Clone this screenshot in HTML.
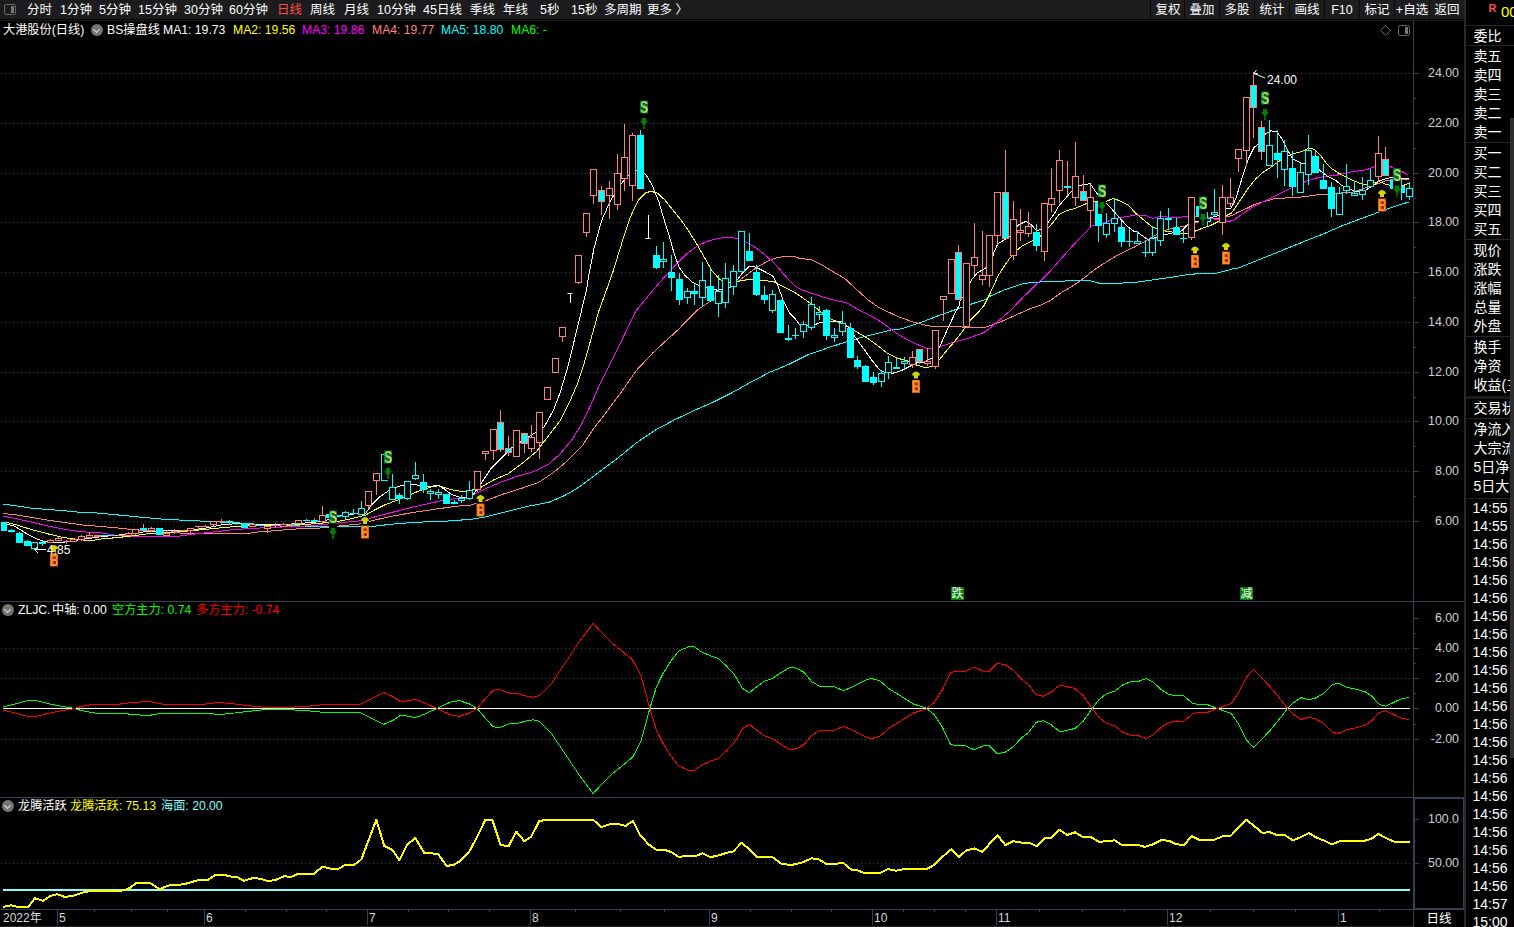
<!DOCTYPE html>
<html lang="zh-CN"><head><meta charset="utf-8"><title>大港股份(日线)</title>
<style>
*{margin:0;padding:0;box-sizing:border-box}
html,body{width:1514px;height:927px;background:#000;overflow:hidden}
body{position:relative;font-family:"Liberation Sans","Noto Sans CJK SC",sans-serif;font-size:12px;color:#fff}
#tb{position:absolute;left:0;top:0;width:1464px;height:19px;background:#1c1c1e;box-shadow:0 1px 0 #050505,0 2px 0 #1b1b1d}
#tb span,#tb b{position:absolute;top:0;height:19px;line-height:21px;overflow:hidden;font-weight:normal;white-space:nowrap;font-size:12.5px}
#tb span.act{color:#ff4d4d}
#tb b{width:34px;text-align:center;background:#1d1d1f;box-shadow:-1px 0 0 #0a0a0a}
#ico{position:absolute;left:4px;top:4px;width:12px;height:11px;border:1px solid #666;border-radius:2px}
#ico:after{content:"";position:absolute;right:1px;top:1px;width:3px;height:7px;background:#777}
#hdr,.cap{position:absolute;left:0;top:21px;width:700px;height:18px;line-height:18px;white-space:nowrap;font-size:12.2px}
#hdr span,.cap span{position:absolute;top:0}
#hdr .dd,.cap .dd{width:12px;height:12px;border-radius:50%;background:#757575}
.dd:after{content:"";position:absolute;left:3px;top:2.5px;width:4px;height:4px;border-right:1px solid #ddd;border-bottom:1px solid #ddd;transform:rotate(45deg)}
#chart{position:absolute;left:0;top:0}
i{position:absolute;left:1414px;width:45px;text-align:right;font-style:normal;font-size:12.4px;line-height:16px;color:#d0d0d0}
em{position:absolute;top:910px;font-style:normal;font-size:12px;line-height:17px;color:#d8d8d8}
#rx{position:absolute;left:1414px;top:911px;width:50px;height:18px;line-height:17px;text-align:center;font-size:12.5px}
#vb{position:absolute;left:1464px;top:0;width:2px;height:927px;background:#2a2a2c}
#rp{position:absolute;left:1466px;top:0;width:48px;height:927px;background:#000;overflow:hidden}
#rp p{position:absolute;left:7.5px;font-size:14px;line-height:20px;white-space:nowrap}
#rp u{position:absolute;left:0;width:48px;height:1px;background:#26262a;text-decoration:none}
#rp .thick{position:absolute;left:0;top:396px;width:48px;height:3px;background:#1b1b1d}
#rp .R{position:absolute;left:22.5px;top:2.5px;font-size:11px;font-weight:bold;color:#ff4d4d;line-height:11px}
#rp .code{position:absolute;left:35px;top:2px;font-size:15px;line-height:19px;color:#ffff00}
#sb{position:absolute;left:1510px;top:118px;width:4px;height:640px;background:#2e2e30}
</style></head><body>
<div id="tb"><div id="ico"></div><span style="left:27px">分时</span><span style="left:60px">1分钟</span><span style="left:99px">5分钟</span><span style="left:138px">15分钟</span><span style="left:184px">30分钟</span><span style="left:229px">60分钟</span><span class="act" style="left:277px">日线</span><span style="left:310px">周线</span><span style="left:344px">月线</span><span style="left:377px">10分钟</span><span style="left:423px">45日线</span><span style="left:470px">季线</span><span style="left:503px">年线</span><span style="left:540px">5秒</span><span style="left:571px">15秒</span><span style="left:604px">多周期</span><span style="left:647px">更多 〉</span><b style="left:1151px">复权</b><b style="left:1185px">叠加</b><b style="left:1220px">多股</b><b style="left:1255px">统计</b><b style="left:1290px">画线</b><b style="left:1325px">F10</b><b style="left:1360px">标记</b><b style="left:1395px">+自选</b><b style="left:1430px">返回</b></div>
<svg id="chart" width="1466" height="927" viewBox="0 0 1466 927" shape-rendering="auto">
<defs><linearGradient id="sg" x1="0" y1="0" x2="1" y2="0"><stop offset="0" stop-color="#4fd060"/><stop offset="0.55" stop-color="#9fe04a"/><stop offset="1" stop-color="#e4ee3c"/></linearGradient></defs>
<line x1="1" y1="73.5" x2="1413" y2="73.5" stroke="#3a4354" stroke-width="1" stroke-dasharray="1 3"/>
<line x1="1" y1="123.5" x2="1413" y2="123.5" stroke="#3a4354" stroke-width="1" stroke-dasharray="1 3"/>
<line x1="1" y1="173.5" x2="1413" y2="173.5" stroke="#3a4354" stroke-width="1" stroke-dasharray="1 3"/>
<line x1="1" y1="222.5" x2="1413" y2="222.5" stroke="#3a4354" stroke-width="1" stroke-dasharray="1 3"/>
<line x1="1" y1="272.5" x2="1413" y2="272.5" stroke="#3a4354" stroke-width="1" stroke-dasharray="1 3"/>
<line x1="1" y1="322.5" x2="1413" y2="322.5" stroke="#3a4354" stroke-width="1" stroke-dasharray="1 3"/>
<line x1="1" y1="372.5" x2="1413" y2="372.5" stroke="#3a4354" stroke-width="1" stroke-dasharray="1 3"/>
<line x1="1" y1="421.5" x2="1413" y2="421.5" stroke="#3a4354" stroke-width="1" stroke-dasharray="1 3"/>
<line x1="1" y1="471.5" x2="1413" y2="471.5" stroke="#3a4354" stroke-width="1" stroke-dasharray="1 3"/>
<line x1="1" y1="521.5" x2="1413" y2="521.5" stroke="#3a4354" stroke-width="1" stroke-dasharray="1 3"/>
<line x1="1" y1="648.5" x2="1413" y2="648.5" stroke="#3a4354" stroke-width="1" stroke-dasharray="1 3"/>
<line x1="1" y1="678.5" x2="1413" y2="678.5" stroke="#3a4354" stroke-width="1" stroke-dasharray="1 3"/>
<line x1="1" y1="739.5" x2="1413" y2="739.5" stroke="#3a4354" stroke-width="1" stroke-dasharray="1 3"/>
<line x1="1" y1="863.5" x2="1413" y2="863.5" stroke="#3a4354" stroke-width="1" stroke-dasharray="1 3"/>
<polyline points="3.2,504.2 15.9,505.8 31.7,508.2 47.6,509.5 63.4,510.6 79.3,512.2 90.0,512.7 90.0,512.3 116.4,514.8 140.7,517.2 164.0,519.3 195.7,520.8 216.8,521.8 250.0,523.8 268.9,524.7 292.7,525.7 315.0,526.6 340.1,526.6 371.5,526.6 390.3,524.3 415.4,522.2 440.5,521.6 465.6,519.7 470.0,519.5 486.6,516.7 505.7,511.9 529.4,506.0 548.5,502.4 565.1,495.3 579.4,486.9 598.4,472.7 617.4,458.4 636.4,442.9 655.5,429.9 674.5,419.9 693.5,410.8 712.5,402.5 731.6,393.0 750.6,382.3 769.6,372.3 788.6,364.5 807.6,355.0 829.8,347.1 835.0,345.5 846.6,341.7 858.3,338.3 869.9,335.2 881.6,332.5 893.2,329.4 900.0,329.1 912.9,325.2 925.9,320.6 938.8,315.5 951.8,310.9 962.2,307.4 969.9,304.5 984.2,299.9 990.6,296.0 1003.6,290.2 1016.5,285.9 1024.3,283.4 1036.0,282.1 1048.9,281.8 1061.9,281.2 1079.9,280.2 1080.4,280.1 1092.0,281.1 1099.8,283.4 1115.3,283.4 1127.0,282.8 1134.8,282.4 1135.5,282.4 1156.3,279.4 1171.8,277.2 1187.4,274.6 1202.9,273.3 1215.9,273.3 1226.2,270.8 1234.6,268.2 1236.7,268.7 1310.4,239.0 1326.0,232.8 1341.5,226.0 1357.0,220.2 1372.6,214.4 1388.1,208.5 1399.8,204.7 1408.5,202.1" fill="none" stroke="#00ffff" stroke-width="1" stroke-linejoin="round" shape-rendering="crispEdges" />
<polyline points="3.2,513.5 15.9,514.8 31.7,517.4 47.6,520.1 63.4,522.4 79.3,524.5 89.9,525.9 90.0,525.6 116.4,527.8 132.3,529.6 139.7,530.1 158.7,531.7 179.9,533.0 216.8,533.2 250.0,533.1 257.0,532.1 268.9,531.2 286.7,529.7 302.2,528.5 315.0,528.5 340.1,525.9 365.2,523.4 371.5,520.9 390.3,516.5 415.4,512.1 440.5,508.4 465.6,505.2 470.0,505.2 484.3,501.2 503.3,494.1 522.3,488.1 539.0,482.2 553.2,472.7 567.5,460.8 581.8,446.5 593.6,428.7 605.5,413.2 619.8,394.2 636.4,370.4 653.1,352.6 667.4,339.5 677.8,330.0 686.6,321.0 698.3,309.3 709.9,301.6 721.6,293.8 733.2,285.0 744.9,276.3 756.5,267.6 768.2,260.8 775.9,257.9 785.6,256.3 795.3,256.9 800.0,258.5 811.7,259.7 821.4,264.6 833.0,271.7 844.7,278.5 856.3,289.2 868.0,299.9 877.7,306.7 889.3,312.5 900.0,317.4 912.9,321.9 925.9,325.2 933.7,326.9 951.8,326.9 969.9,327.1 985.5,327.1 993.2,324.5 1003.6,320.6 1016.5,314.8 1029.5,309.0 1042.4,304.5 1050.2,300.6 1061.9,292.2 1070.9,287.0 1079.9,281.2 1084.3,277.6 1095.9,268.8 1107.6,261.1 1119.2,254.3 1130.9,248.4 1134.8,246.9 1135.5,246.1 1143.3,242.3 1151.1,237.7 1158.9,233.2 1166.6,229.9 1174.4,228.0 1182.2,226.7 1189.9,224.8 1197.7,222.2 1205.5,219.6 1213.3,218.3 1221.0,218.3 1228.8,216.3 1234.6,214.4 1236.7,212.8 1244.4,209.5 1254.1,204.7 1263.8,201.7 1275.5,198.3 1289.1,197.9 1302.7,196.9 1316.3,195.0 1329.9,194.0 1341.5,193.0 1353.2,192.0 1364.8,188.2 1376.5,184.3 1386.2,180.4 1395.9,179.4 1408.5,179.4" fill="none" stroke="#ff8080" stroke-width="1" stroke-linejoin="round" shape-rendering="crispEdges" />
<polyline points="3.2,516.4 15.9,518.5 31.7,522.2 47.6,525.9 63.4,529.1 79.3,531.5 89.9,532.3 90.0,532.4 100.6,532.7 116.4,535.4 140.7,536.4 177.7,536.4 185.1,535.2 193.6,534.1 209.5,532.4 225.3,530.6 233.8,529.6 250.0,528.5 268.9,527.6 286.7,526.8 302.2,526.2 315.0,525.3 340.1,522.8 365.2,520.3 371.5,517.8 390.3,512.8 415.4,506.5 440.5,500.9 453.0,499.0 465.6,497.7 470.0,496.4 484.3,489.3 500.9,482.2 517.6,476.2 534.2,471.5 548.5,464.3 560.4,453.6 572.2,439.4 581.8,423.9 591.3,403.7 600.8,382.3 610.3,363.3 619.8,344.3 635.6,311.4 651.7,291.8 663.3,278.3 675.0,265.6 686.6,254.0 698.3,245.2 709.9,240.4 721.6,237.9 733.2,237.9 739.0,238.8 746.8,242.3 756.5,248.2 766.2,255.9 775.9,264.7 785.6,276.3 795.3,286.0 800.0,289.2 811.7,293.1 823.3,297.0 835.0,300.3 846.6,302.8 858.3,309.6 869.9,315.4 881.6,322.2 893.2,331.0 900.0,335.5 912.9,342.7 925.9,348.1 932.4,348.5 938.8,347.2 951.8,342.7 964.7,339.4 977.7,334.9 984.2,332.3 990.6,327.8 997.1,321.9 1010.1,310.9 1023.0,297.3 1036.0,284.4 1042.4,279.2 1048.9,272.7 1061.9,257.8 1074.8,243.6 1079.9,238.0 1080.4,237.8 1092.0,226.1 1099.8,224.2 1107.6,221.3 1119.2,217.8 1130.9,215.8 1134.8,215.4 1135.5,214.8 1145.9,215.7 1152.4,218.3 1158.9,216.7 1166.6,217.0 1177.0,217.3 1187.4,216.7 1197.7,216.3 1208.1,217.6 1213.3,218.9 1221.0,219.8 1228.8,221.5 1234.6,219.8 1236.7,217.7 1240.5,215.3 1250.2,208.5 1260.0,203.7 1269.7,198.8 1279.4,194.0 1289.1,189.1 1298.8,184.3 1308.5,180.4 1318.2,177.5 1327.9,176.1 1337.6,175.0 1347.3,172.6 1357.0,171.1 1366.7,169.7 1374.5,166.8 1382.3,164.9 1390.0,166.4 1397.8,169.7 1405.6,173.6 1408.5,175.5" fill="none" stroke="#ff00ff" stroke-width="1" stroke-linejoin="round" shape-rendering="crispEdges" />
<polyline points="7.4,522.7 15.9,524.8 31.7,529.6 47.6,533.8 63.4,537.5 74.0,538.9 84.6,540.2 89.9,540.7 90.0,540.7 102.7,538.8 116.4,537.7 132.3,535.9 147.1,533.8 164.0,532.7 179.9,531.7 195.7,530.3 209.5,529.0 225.3,527.4 238.0,526.4 250.0,525.9 268.9,525.2 286.7,525.2 302.2,524.4 315.0,523.8 337.6,521.6 352.6,518.4 365.2,515.3 375.2,509.6 385.3,504.6 395.3,500.9 405.3,497.1 415.4,492.4 424.2,489.2 432.9,486.4 439.2,485.8 446.7,488.3 454.3,490.4 461.8,491.4 469.3,490.8 479.5,488.1 493.8,479.8 508.0,473.9 522.3,463.2 536.6,451.3 548.5,435.8 560.4,420.4 569.9,401.3 577.0,384.7 584.1,363.3 588.9,346.6 598.7,311.4 606.5,290.0 613.4,270.4 622.0,242.4 630.6,216.5 638.2,200.3 645.7,192.8 651.1,191.3 657.6,193.2 665.1,200.3 673.8,211.1 682.4,221.9 688.5,230.7 696.3,243.3 704.1,256.9 711.8,270.5 719.6,279.2 727.4,283.1 735.1,282.5 741.0,280.6 748.7,279.6 756.5,279.8 764.3,280.6 774.0,281.7 783.7,287.0 795.3,292.8 800.0,296.0 809.7,302.8 819.4,310.6 829.1,318.3 838.8,322.2 848.5,327.1 858.3,332.9 868.0,338.7 877.7,345.5 887.4,353.3 897.1,358.2 906.8,360.5 916.5,365.0 926.2,367.9 932.0,365.9 939.8,359.1 947.6,349.4 955.7,340.1 964.7,328.4 969.9,320.6 977.7,312.9 984.2,305.1 990.6,292.2 998.4,275.3 1004.9,265.0 1010.1,257.8 1016.5,250.7 1021.7,246.2 1029.5,242.3 1033.4,240.1 1039.6,236.8 1047.4,229.0 1053.2,222.2 1059.0,214.5 1066.8,210.6 1074.6,208.6 1082.3,205.3 1090.1,202.2 1097.9,201.8 1105.6,201.8 1113.4,198.3 1121.2,201.5 1128.9,205.7 1134.8,212.5 1135.5,213.1 1143.3,219.6 1151.1,226.1 1158.9,229.9 1166.6,231.2 1177.0,232.8 1187.4,233.6 1195.1,231.2 1202.9,228.0 1210.7,225.4 1218.4,221.5 1223.6,217.0 1231.4,213.1 1236.7,205.6 1240.5,199.8 1248.3,188.2 1256.1,178.4 1263.8,171.7 1271.6,166.8 1279.4,161.0 1287.1,156.1 1294.9,153.2 1302.7,151.3 1308.5,148.3 1314.3,149.3 1320.1,155.1 1326.0,162.9 1331.8,168.7 1339.6,173.6 1347.3,177.5 1355.1,181.4 1362.9,184.3 1370.6,184.3 1378.4,181.4 1386.2,184.3 1393.9,186.2 1401.7,186.2 1408.5,183.3" fill="none" stroke="#ffff00" stroke-width="1" stroke-linejoin="round" shape-rendering="crispEdges" />
<polyline points="7.4,524.3 13.7,525.9 21.1,530.1 28.5,534.9 35.9,538.6 44.4,541.4 52.9,542.8 63.4,542.3 74.0,540.7 84.6,538.9 89.9,538.3 90.0,538.3 102.7,536.4 116.4,535.4 140.7,532.2 164.0,530.6 179.9,530.6 195.7,529.6 209.5,527.4 222.1,524.8 238.0,523.5 250.0,525.2 268.9,524.4 286.7,524.4 302.2,523.2 315.0,522.2 326.3,520.3 337.6,515.9 352.6,514.0 365.2,513.8 371.5,505.2 380.2,496.5 390.3,489.6 400.3,485.8 410.4,484.2 419.1,485.2 427.9,486.7 438.0,485.4 444.2,488.9 451.8,494.6 459.3,497.1 465.6,497.1 473.6,494.1 481.9,482.2 491.4,467.9 500.9,458.4 511.6,447.7 543.7,427.5 553.2,410.8 560.4,391.8 567.5,368.0 572.2,349.0 576.8,330.0 581.3,311.4 586.5,290.0 588.5,276.9 593.9,248.9 601.5,220.8 610.1,201.4 617.7,188.5 625.2,178.7 630.6,173.4 638.2,169.5 645.7,174.4 652.2,185.2 658.7,201.4 665.1,223.0 669.1,235.5 674.0,253.0 678.8,266.6 684.7,275.3 692.4,282.1 698.3,285.0 704.1,287.0 717.7,290.3 729.3,288.0 737.1,280.2 742.9,272.4 748.7,266.6 752.6,266.2 758.4,268.5 766.2,272.4 773.0,276.3 777.9,286.0 783.7,301.6 789.5,313.2 795.3,319.0 800.0,325.1 811.7,326.1 819.4,322.8 829.1,321.3 840.8,321.3 848.5,327.1 856.3,338.7 864.1,349.4 871.8,360.1 879.6,369.8 885.4,372.7 893.2,373.1 901.0,370.8 908.7,366.9 916.5,363.0 924.3,362.0 932.0,358.2 939.8,346.5 947.6,329.0 955.3,312.5 959.6,304.8 960.0,300.9 965.8,293.1 971.7,279.5 977.5,272.7 985.2,268.3 991.1,264.0 994.0,252.3 997.9,243.6 1004.7,239.7 1011.5,234.9 1018.3,225.1 1026.0,221.3 1031.8,225.1 1036.7,231.0 1041.6,229.0 1047.4,223.2 1053.2,215.4 1059.0,205.7 1065.8,198.0 1072.6,190.2 1078.4,185.3 1084.3,184.8 1090.1,183.4 1095.9,192.1 1103.7,200.9 1111.5,208.6 1119.2,217.4 1127.0,226.1 1134.8,231.9 1136.8,231.9 1143.3,236.4 1148.5,240.3 1155.0,237.7 1164.0,235.1 1170.5,233.2 1177.0,232.5 1182.2,230.6 1187.4,224.8 1192.5,222.2 1197.7,221.5 1208.1,218.9 1213.3,217.0 1218.4,215.7 1223.6,211.8 1226.2,208.6 1230.8,208.2 1234.0,202.7 1236.7,195.9 1242.5,176.5 1248.3,159.0 1254.1,147.4 1260.0,142.5 1265.8,133.8 1270.6,130.9 1276.5,131.5 1281.3,137.7 1287.1,149.3 1293.0,159.0 1300.7,162.9 1306.6,163.9 1314.3,164.9 1320.1,170.7 1327.9,176.5 1335.7,180.4 1341.5,185.2 1349.3,189.1 1357.0,192.0 1364.8,190.5 1372.6,186.2 1380.3,180.4 1388.1,178.1 1395.9,177.5 1403.6,178.4 1408.5,178.8" fill="none" stroke="#ffffff" stroke-width="1" stroke-linejoin="round" shape-rendering="crispEdges" />
<rect x="1" y="522" width="6" height="9" fill="#00ffff"/>
<line x1="11.5" y1="529" x2="11.5" y2="530" stroke="#00ffff"/>
<rect x="8" y="530" width="7" height="2" fill="#00ffff"/>
<line x1="19.5" y1="532" x2="19.5" y2="533" stroke="#00ffff"/>
<rect x="16" y="533" width="7" height="10" fill="#00ffff"/>
<line x1="27.5" y1="540" x2="27.5" y2="541" stroke="#00ffff"/>
<rect x="24" y="541" width="7" height="5" fill="#00ffff"/>
<rect x="31.5" y="542.5" width="6" height="6" fill="#000" stroke="#00ffff"/>
<line x1="42.5" y1="541" x2="42.5" y2="542" stroke="#00ffff"/>
<line x1="42.5" y1="544" x2="42.5" y2="546" stroke="#00ffff"/>
<rect x="39" y="542" width="7" height="2" fill="#00ffff"/>
<line x1="50.5" y1="539" x2="50.5" y2="540" stroke="#ff8080"/>
<rect x="47.5" y="540.5" width="6" height="2" fill="#000" stroke="#ff8080"/>
<line x1="58.5" y1="537" x2="58.5" y2="538" stroke="#ff8080"/>
<rect x="55.5" y="538.5" width="6" height="2" fill="#000" stroke="#ff8080"/>
<line x1="66.5" y1="540" x2="66.5" y2="541" stroke="#ff8080"/>
<line x1="66.5" y1="542" x2="66.5" y2="544" stroke="#ff8080"/>
<rect x="63" y="541" width="7" height="1" fill="#ff8080"/>
<line x1="73.5" y1="538" x2="73.5" y2="539" stroke="#ff8080"/>
<rect x="70.5" y="539.5" width="6" height="2" fill="#000" stroke="#ff8080"/>
<line x1="81.5" y1="535" x2="81.5" y2="536" stroke="#ff8080"/>
<line x1="81.5" y1="540" x2="81.5" y2="541" stroke="#ff8080"/>
<rect x="78.5" y="536.5" width="6" height="3" fill="#000" stroke="#ff8080"/>
<line x1="89.5" y1="532" x2="89.5" y2="535" stroke="#ff8080"/>
<line x1="89.5" y1="538" x2="89.5" y2="539" stroke="#ff8080"/>
<rect x="86.5" y="535.5" width="6" height="2" fill="#000" stroke="#ff8080"/>
<line x1="97.5" y1="537" x2="97.5" y2="538" stroke="#ff8080"/>
<rect x="94" y="535" width="7" height="2" fill="#ff8080"/>
<rect x="101" y="535" width="7" height="1" fill="#00ffff"/>
<rect x="109" y="535" width="7" height="1" fill="#00ffff"/>
<rect x="117" y="535" width="7" height="1" fill="#ff8080"/>
<line x1="128.5" y1="532" x2="128.5" y2="533" stroke="#ff8080"/>
<rect x="125.5" y="533.5" width="6" height="2" fill="#000" stroke="#ff8080"/>
<line x1="135.5" y1="534" x2="135.5" y2="535" stroke="#ff8080"/>
<rect x="132.5" y="529.5" width="6" height="4" fill="#000" stroke="#ff8080"/>
<line x1="143.5" y1="524" x2="143.5" y2="528" stroke="#ff8080"/>
<rect x="140" y="528" width="7" height="2" fill="#00ffff"/>
<line x1="151.5" y1="527" x2="151.5" y2="528" stroke="#ff8080"/>
<line x1="151.5" y1="531" x2="151.5" y2="532" stroke="#ff8080"/>
<rect x="148.5" y="528.5" width="6" height="2" fill="#000" stroke="#ff8080"/>
<rect x="156" y="528" width="7" height="7" fill="#00ffff"/>
<line x1="166.5" y1="531" x2="166.5" y2="533" stroke="#ff8080"/>
<rect x="163.5" y="533.5" width="6" height="2" fill="#000" stroke="#ff8080"/>
<line x1="174.5" y1="529" x2="174.5" y2="531" stroke="#ff8080"/>
<line x1="174.5" y1="532" x2="174.5" y2="534" stroke="#ff8080"/>
<rect x="171" y="531" width="7" height="1" fill="#ff8080"/>
<rect x="179" y="530" width="7" height="1" fill="#ff8080"/>
<line x1="190.5" y1="531" x2="190.5" y2="533" stroke="#ff8080"/>
<rect x="187.5" y="528.5" width="6" height="2" fill="#000" stroke="#ff8080"/>
<line x1="198.5" y1="527" x2="198.5" y2="530" stroke="#ff8080"/>
<rect x="195" y="526" width="7" height="1" fill="#ff8080"/>
<line x1="205.5" y1="525" x2="205.5" y2="526" stroke="#ff8080"/>
<rect x="202" y="526" width="7" height="1" fill="#ff8080"/>
<line x1="213.5" y1="525" x2="213.5" y2="527" stroke="#ff8080"/>
<rect x="210.5" y="521.5" width="6" height="3" fill="#000" stroke="#ff8080"/>
<line x1="221.5" y1="519" x2="221.5" y2="521" stroke="#ff8080"/>
<line x1="221.5" y1="522" x2="221.5" y2="524" stroke="#ff8080"/>
<rect x="218" y="521" width="7" height="1" fill="#ff8080"/>
<line x1="229.5" y1="520" x2="229.5" y2="521" stroke="#ff8080"/>
<line x1="229.5" y1="523" x2="229.5" y2="525" stroke="#ff8080"/>
<rect x="226" y="521" width="7" height="2" fill="#00ffff"/>
<line x1="236.5" y1="523" x2="236.5" y2="525" stroke="#00ffff"/>
<rect x="233" y="522" width="7" height="1" fill="#00ffff"/>
<rect x="241" y="524" width="7" height="4" fill="#00ffff"/>
<rect x="249.5" y="524.5" width="6" height="2" fill="#000" stroke="#ff8080"/>
<rect x="257" y="525" width="7" height="1" fill="#00ffff"/>
<line x1="267.5" y1="529" x2="267.5" y2="533" stroke="#ff8080"/>
<rect x="264.5" y="526.5" width="6" height="2" fill="#000" stroke="#ff8080"/>
<line x1="275.5" y1="523" x2="275.5" y2="525" stroke="#ff8080"/>
<line x1="275.5" y1="526" x2="275.5" y2="528" stroke="#ff8080"/>
<rect x="272" y="525" width="7" height="1" fill="#ff8080"/>
<line x1="283.5" y1="523" x2="283.5" y2="524" stroke="#ff8080"/>
<rect x="280.5" y="524.5" width="6" height="2" fill="#000" stroke="#ff8080"/>
<line x1="291.5" y1="523" x2="291.5" y2="524" stroke="#ff8080"/>
<line x1="291.5" y1="525" x2="291.5" y2="527" stroke="#ff8080"/>
<rect x="288" y="524" width="7" height="1" fill="#ff8080"/>
<rect x="295.5" y="520.5" width="6" height="3" fill="#000" stroke="#ff8080"/>
<line x1="306.5" y1="519" x2="306.5" y2="520" stroke="#00ffff"/>
<rect x="303" y="520" width="7" height="1" fill="#00ffff"/>
<line x1="314.5" y1="518" x2="314.5" y2="520" stroke="#ff8080"/>
<rect x="311" y="520" width="7" height="2" fill="#00ffff"/>
<line x1="322.5" y1="506" x2="322.5" y2="515" stroke="#ff8080"/>
<line x1="322.5" y1="522" x2="322.5" y2="523" stroke="#ff8080"/>
<rect x="319.5" y="515.5" width="6" height="6" fill="#000" stroke="#ff8080"/>
<rect x="326" y="514" width="7" height="4" fill="#00ffff"/>
<rect x="334" y="515" width="7" height="2" fill="#00ffff"/>
<line x1="345.5" y1="511" x2="345.5" y2="512" stroke="#00ffff"/>
<line x1="345.5" y1="517" x2="345.5" y2="519" stroke="#00ffff"/>
<rect x="342.5" y="512.5" width="6" height="4" fill="#000" stroke="#00ffff"/>
<line x1="353.5" y1="509" x2="353.5" y2="513" stroke="#00ffff"/>
<line x1="353.5" y1="514" x2="353.5" y2="515" stroke="#00ffff"/>
<rect x="350" y="513" width="7" height="1" fill="#00ffff"/>
<line x1="361.5" y1="501" x2="361.5" y2="508" stroke="#00ffff"/>
<rect x="358.5" y="508.5" width="6" height="6" fill="#000" stroke="#00ffff"/>
<line x1="368.5" y1="506" x2="368.5" y2="509" stroke="#ff8080"/>
<rect x="365.5" y="491.5" width="6" height="14" fill="#000" stroke="#ff8080"/>
<line x1="376.5" y1="481" x2="376.5" y2="495" stroke="#ff8080"/>
<rect x="373.5" y="473.5" width="6" height="7" fill="#000" stroke="#ff8080"/>
<rect x="381.5" y="454.5" width="6" height="26" fill="#000" stroke="#00ffff"/>
<line x1="392.5" y1="474" x2="392.5" y2="487" stroke="#00ffff"/>
<rect x="389.5" y="487.5" width="6" height="12" fill="#000" stroke="#00ffff"/>
<line x1="399.5" y1="493" x2="399.5" y2="495" stroke="#00ffff"/>
<line x1="399.5" y1="499" x2="399.5" y2="504" stroke="#00ffff"/>
<rect x="396" y="495" width="7" height="4" fill="#00ffff"/>
<line x1="407.5" y1="499" x2="407.5" y2="500" stroke="#00ffff"/>
<rect x="404.5" y="481.5" width="6" height="17" fill="#000" stroke="#00ffff"/>
<line x1="415.5" y1="462" x2="415.5" y2="475" stroke="#00ffff"/>
<line x1="415.5" y1="479" x2="415.5" y2="480" stroke="#00ffff"/>
<rect x="412.5" y="475.5" width="6" height="3" fill="#000" stroke="#00ffff"/>
<line x1="423.5" y1="474" x2="423.5" y2="482" stroke="#00ffff"/>
<line x1="423.5" y1="490" x2="423.5" y2="493" stroke="#00ffff"/>
<rect x="420" y="482" width="7" height="8" fill="#00ffff"/>
<line x1="430.5" y1="489" x2="430.5" y2="491" stroke="#00ffff"/>
<line x1="430.5" y1="494" x2="430.5" y2="500" stroke="#00ffff"/>
<rect x="427.5" y="491.5" width="6" height="2" fill="#000" stroke="#00ffff"/>
<line x1="438.5" y1="489" x2="438.5" y2="492" stroke="#00ffff"/>
<line x1="438.5" y1="495" x2="438.5" y2="499" stroke="#00ffff"/>
<rect x="435.5" y="492.5" width="6" height="2" fill="#000" stroke="#00ffff"/>
<rect x="443" y="494" width="7" height="10" fill="#00ffff"/>
<line x1="454.5" y1="500" x2="454.5" y2="502" stroke="#00ffff"/>
<rect x="451" y="502" width="7" height="2" fill="#00ffff"/>
<line x1="461.5" y1="495" x2="461.5" y2="498" stroke="#00ffff"/>
<line x1="461.5" y1="501" x2="461.5" y2="503" stroke="#00ffff"/>
<rect x="458.5" y="498.5" width="6" height="2" fill="#000" stroke="#00ffff"/>
<line x1="469.5" y1="481" x2="469.5" y2="490" stroke="#00ffff"/>
<line x1="469.5" y1="499" x2="469.5" y2="500" stroke="#00ffff"/>
<rect x="466.5" y="490.5" width="6" height="8" fill="#000" stroke="#00ffff"/>
<line x1="477.5" y1="490" x2="477.5" y2="492" stroke="#ff8080"/>
<rect x="474.5" y="471.5" width="6" height="18" fill="#000" stroke="#ff8080"/>
<line x1="485.5" y1="454" x2="485.5" y2="460" stroke="#ff8080"/>
<rect x="482.5" y="451.5" width="6" height="2" fill="#000" stroke="#ff8080"/>
<line x1="493.5" y1="451" x2="493.5" y2="460" stroke="#ff8080"/>
<rect x="490.5" y="429.5" width="6" height="21" fill="#000" stroke="#ff8080"/>
<line x1="500.5" y1="410" x2="500.5" y2="422" stroke="#ff8080"/>
<line x1="500.5" y1="450" x2="500.5" y2="452" stroke="#ff8080"/>
<rect x="497.5" y="422.5" width="6" height="27" fill="#00ffff" stroke="#ff8080"/>
<line x1="508.5" y1="436" x2="508.5" y2="448" stroke="#ff8080"/>
<line x1="508.5" y1="453" x2="508.5" y2="456" stroke="#ff8080"/>
<rect x="505.5" y="448.5" width="6" height="4" fill="#00ffff" stroke="#ff8080"/>
<rect x="513.5" y="430.5" width="6" height="26" fill="#000" stroke="#ff8080"/>
<line x1="524.5" y1="444" x2="524.5" y2="453" stroke="#ff8080"/>
<rect x="521.5" y="433.5" width="6" height="10" fill="#00ffff" stroke="#ff8080"/>
<line x1="531.5" y1="425" x2="531.5" y2="437" stroke="#ff8080"/>
<line x1="531.5" y1="449" x2="531.5" y2="452" stroke="#ff8080"/>
<rect x="528.5" y="437.5" width="6" height="11" fill="#000" stroke="#ff8080"/>
<line x1="539.5" y1="443" x2="539.5" y2="459" stroke="#ff8080"/>
<rect x="536.5" y="412.5" width="6" height="30" fill="#000" stroke="#ff8080"/>
<rect x="544.5" y="387.5" width="6" height="12" fill="#000" stroke="#ff8080"/>
<rect x="552.5" y="358.5" width="6" height="14" fill="#000" stroke="#ff8080"/>
<line x1="562.5" y1="337" x2="562.5" y2="342" stroke="#ff8080"/>
<rect x="559.5" y="327.5" width="6" height="9" fill="#000" stroke="#ff8080"/>
<path d="M567.5 293.5H572.5M570.5 293V303" stroke="#fff" stroke-width="1" fill="none"/>
<line x1="578.5" y1="283" x2="578.5" y2="284" stroke="#ff8080"/>
<rect x="575.5" y="255.5" width="6" height="27" fill="#000" stroke="#ff8080"/>
<line x1="586.5" y1="233" x2="586.5" y2="237" stroke="#ff8080"/>
<rect x="583.5" y="213.5" width="6" height="19" fill="#000" stroke="#ff8080"/>
<line x1="593.5" y1="196" x2="593.5" y2="204" stroke="#ff8080"/>
<rect x="590.5" y="169.5" width="6" height="26" fill="#000" stroke="#ff8080"/>
<line x1="601.5" y1="186" x2="601.5" y2="190" stroke="#ff8080"/>
<line x1="601.5" y1="202" x2="601.5" y2="215" stroke="#ff8080"/>
<rect x="598.5" y="190.5" width="6" height="11" fill="#00ffff" stroke="#ff8080"/>
<line x1="609.5" y1="181" x2="609.5" y2="188" stroke="#ff8080"/>
<line x1="609.5" y1="196" x2="609.5" y2="219" stroke="#ff8080"/>
<rect x="606.5" y="188.5" width="6" height="7" fill="#000" stroke="#ff8080"/>
<line x1="617.5" y1="154" x2="617.5" y2="173" stroke="#ff8080"/>
<line x1="617.5" y1="205" x2="617.5" y2="210" stroke="#ff8080"/>
<rect x="614.5" y="173.5" width="6" height="31" fill="#000" stroke="#ff8080"/>
<line x1="624.5" y1="124" x2="624.5" y2="157" stroke="#ff8080"/>
<line x1="624.5" y1="179" x2="624.5" y2="191" stroke="#ff8080"/>
<rect x="621.5" y="157.5" width="6" height="21" fill="#000" stroke="#ff8080"/>
<line x1="632.5" y1="133" x2="632.5" y2="135" stroke="#ff8080"/>
<line x1="632.5" y1="186" x2="632.5" y2="201" stroke="#ff8080"/>
<rect x="629.5" y="135.5" width="6" height="50" fill="#000" stroke="#ff8080"/>
<line x1="640.5" y1="129" x2="640.5" y2="135" stroke="#00ffff"/>
<rect x="637" y="135" width="7" height="54" fill="#00ffff"/>
<path d="M645.5 238.5H650.5M648.5 215V238" stroke="#fff" stroke-width="1" fill="none"/>
<line x1="656.5" y1="246" x2="656.5" y2="255" stroke="#00ffff"/>
<line x1="656.5" y1="268" x2="656.5" y2="269" stroke="#00ffff"/>
<rect x="653" y="255" width="7" height="13" fill="#00ffff"/>
<line x1="663.5" y1="242" x2="663.5" y2="259" stroke="#00ffff"/>
<line x1="663.5" y1="262" x2="663.5" y2="268" stroke="#00ffff"/>
<rect x="660.5" y="259.5" width="6" height="2" fill="#000" stroke="#00ffff"/>
<line x1="671.5" y1="255" x2="671.5" y2="272" stroke="#00ffff"/>
<line x1="671.5" y1="278" x2="671.5" y2="291" stroke="#00ffff"/>
<rect x="668" y="272" width="7" height="6" fill="#00ffff"/>
<line x1="679.5" y1="273" x2="679.5" y2="279" stroke="#00ffff"/>
<line x1="679.5" y1="300" x2="679.5" y2="305" stroke="#00ffff"/>
<rect x="676" y="279" width="7" height="21" fill="#00ffff"/>
<line x1="687.5" y1="288" x2="687.5" y2="291" stroke="#00ffff"/>
<line x1="687.5" y1="298" x2="687.5" y2="304" stroke="#00ffff"/>
<rect x="684.5" y="291.5" width="6" height="6" fill="#000" stroke="#00ffff"/>
<line x1="694.5" y1="284" x2="694.5" y2="291" stroke="#00ffff"/>
<line x1="694.5" y1="294" x2="694.5" y2="305" stroke="#00ffff"/>
<rect x="691" y="291" width="7" height="3" fill="#00ffff"/>
<line x1="702.5" y1="262" x2="702.5" y2="280" stroke="#00ffff"/>
<line x1="702.5" y1="298" x2="702.5" y2="307" stroke="#00ffff"/>
<rect x="699.5" y="280.5" width="6" height="17" fill="#000" stroke="#00ffff"/>
<line x1="710.5" y1="268" x2="710.5" y2="286" stroke="#00ffff"/>
<line x1="710.5" y1="301" x2="710.5" y2="302" stroke="#00ffff"/>
<rect x="707" y="286" width="7" height="15" fill="#00ffff"/>
<line x1="718.5" y1="275" x2="718.5" y2="291" stroke="#00ffff"/>
<line x1="718.5" y1="304" x2="718.5" y2="317" stroke="#00ffff"/>
<rect x="715.5" y="291.5" width="6" height="12" fill="#000" stroke="#00ffff"/>
<line x1="725.5" y1="263" x2="725.5" y2="278" stroke="#00ffff"/>
<line x1="725.5" y1="303" x2="725.5" y2="308" stroke="#00ffff"/>
<rect x="722.5" y="278.5" width="6" height="24" fill="#000" stroke="#00ffff"/>
<line x1="733.5" y1="265" x2="733.5" y2="271" stroke="#00ffff"/>
<line x1="733.5" y1="287" x2="733.5" y2="295" stroke="#00ffff"/>
<rect x="730.5" y="271.5" width="6" height="15" fill="#000" stroke="#00ffff"/>
<rect x="738.5" y="231.5" width="6" height="40" fill="#000" stroke="#00ffff"/>
<line x1="749.5" y1="233" x2="749.5" y2="251" stroke="#00ffff"/>
<rect x="746" y="251" width="7" height="10" fill="#00ffff"/>
<line x1="756.5" y1="265" x2="756.5" y2="272" stroke="#00ffff"/>
<line x1="756.5" y1="295" x2="756.5" y2="296" stroke="#00ffff"/>
<rect x="753" y="272" width="7" height="23" fill="#00ffff"/>
<line x1="764.5" y1="286" x2="764.5" y2="295" stroke="#00ffff"/>
<line x1="764.5" y1="300" x2="764.5" y2="304" stroke="#00ffff"/>
<rect x="761" y="295" width="7" height="5" fill="#00ffff"/>
<line x1="772.5" y1="290" x2="772.5" y2="294" stroke="#00ffff"/>
<line x1="772.5" y1="311" x2="772.5" y2="313" stroke="#00ffff"/>
<rect x="769.5" y="294.5" width="6" height="16" fill="#000" stroke="#00ffff"/>
<rect x="777" y="300" width="7" height="33" fill="#00ffff"/>
<line x1="788.5" y1="325" x2="788.5" y2="338" stroke="#00ffff"/>
<line x1="788.5" y1="340" x2="788.5" y2="341" stroke="#00ffff"/>
<rect x="785" y="338" width="7" height="2" fill="#00ffff"/>
<line x1="795.5" y1="328" x2="795.5" y2="335" stroke="#00ffff"/>
<line x1="795.5" y1="336" x2="795.5" y2="339" stroke="#00ffff"/>
<rect x="792" y="335" width="7" height="1" fill="#00ffff"/>
<line x1="803.5" y1="321" x2="803.5" y2="324" stroke="#00ffff"/>
<line x1="803.5" y1="332" x2="803.5" y2="338" stroke="#00ffff"/>
<rect x="800.5" y="324.5" width="6" height="7" fill="#000" stroke="#00ffff"/>
<line x1="811.5" y1="297" x2="811.5" y2="304" stroke="#00ffff"/>
<line x1="811.5" y1="328" x2="811.5" y2="330" stroke="#00ffff"/>
<rect x="808.5" y="304.5" width="6" height="23" fill="#000" stroke="#00ffff"/>
<line x1="819.5" y1="306" x2="819.5" y2="312" stroke="#00ffff"/>
<line x1="819.5" y1="315" x2="819.5" y2="320" stroke="#00ffff"/>
<rect x="816.5" y="312.5" width="6" height="2" fill="#000" stroke="#00ffff"/>
<line x1="826.5" y1="309" x2="826.5" y2="310" stroke="#00ffff"/>
<line x1="826.5" y1="336" x2="826.5" y2="340" stroke="#00ffff"/>
<rect x="823" y="310" width="7" height="26" fill="#00ffff"/>
<line x1="834.5" y1="328" x2="834.5" y2="335" stroke="#00ffff"/>
<line x1="834.5" y1="338" x2="834.5" y2="342" stroke="#00ffff"/>
<rect x="831.5" y="335.5" width="6" height="2" fill="#000" stroke="#00ffff"/>
<line x1="842.5" y1="311" x2="842.5" y2="323" stroke="#00ffff"/>
<line x1="842.5" y1="332" x2="842.5" y2="336" stroke="#00ffff"/>
<rect x="839.5" y="323.5" width="6" height="8" fill="#000" stroke="#00ffff"/>
<line x1="850.5" y1="323" x2="850.5" y2="328" stroke="#00ffff"/>
<rect x="847" y="328" width="7" height="30" fill="#00ffff"/>
<line x1="857.5" y1="356" x2="857.5" y2="360" stroke="#00ffff"/>
<line x1="857.5" y1="367" x2="857.5" y2="369" stroke="#00ffff"/>
<rect x="854" y="360" width="7" height="7" fill="#00ffff"/>
<line x1="865.5" y1="365" x2="865.5" y2="366" stroke="#00ffff"/>
<rect x="862" y="366" width="7" height="16" fill="#00ffff"/>
<line x1="873.5" y1="372" x2="873.5" y2="377" stroke="#00ffff"/>
<line x1="873.5" y1="383" x2="873.5" y2="385" stroke="#00ffff"/>
<rect x="870" y="377" width="7" height="6" fill="#00ffff"/>
<line x1="881.5" y1="370" x2="881.5" y2="373" stroke="#00ffff"/>
<line x1="881.5" y1="382" x2="881.5" y2="387" stroke="#00ffff"/>
<rect x="878.5" y="373.5" width="6" height="8" fill="#000" stroke="#00ffff"/>
<line x1="888.5" y1="356" x2="888.5" y2="362" stroke="#00ffff"/>
<line x1="888.5" y1="373" x2="888.5" y2="379" stroke="#00ffff"/>
<rect x="885.5" y="362.5" width="6" height="10" fill="#000" stroke="#00ffff"/>
<line x1="896.5" y1="358" x2="896.5" y2="367" stroke="#00ffff"/>
<rect x="893" y="367" width="7" height="2" fill="#00ffff"/>
<line x1="904.5" y1="357" x2="904.5" y2="361" stroke="#00ffff"/>
<line x1="904.5" y1="364" x2="904.5" y2="369" stroke="#00ffff"/>
<rect x="901.5" y="361.5" width="6" height="2" fill="#000" stroke="#00ffff"/>
<line x1="912.5" y1="351" x2="912.5" y2="357" stroke="#ff8080"/>
<line x1="912.5" y1="365" x2="912.5" y2="368" stroke="#ff8080"/>
<rect x="909.5" y="357.5" width="6" height="7" fill="#000" stroke="#ff8080"/>
<line x1="919.5" y1="362" x2="919.5" y2="364" stroke="#ff8080"/>
<rect x="916.5" y="349.5" width="6" height="12" fill="#00ffff" stroke="#ff8080"/>
<line x1="927.5" y1="348" x2="927.5" y2="361" stroke="#ff8080"/>
<line x1="927.5" y1="364" x2="927.5" y2="366" stroke="#ff8080"/>
<rect x="924.5" y="361.5" width="6" height="2" fill="#000" stroke="#ff8080"/>
<line x1="935.5" y1="367" x2="935.5" y2="369" stroke="#ff8080"/>
<rect x="932.5" y="330.5" width="6" height="36" fill="#000" stroke="#ff8080"/>
<line x1="943.5" y1="300" x2="943.5" y2="321" stroke="#ff8080"/>
<rect x="940.5" y="296.5" width="6" height="3" fill="#000" stroke="#ff8080"/>
<rect x="948.5" y="259.5" width="6" height="34" fill="#000" stroke="#ff8080"/>
<line x1="958.5" y1="245" x2="958.5" y2="252" stroke="#ff8080"/>
<rect x="955.5" y="252.5" width="6" height="47" fill="#00ffff" stroke="#ff8080"/>
<rect x="963.5" y="263.5" width="6" height="63" fill="#000" stroke="#ff8080"/>
<line x1="974.5" y1="223" x2="974.5" y2="257" stroke="#ff8080"/>
<line x1="974.5" y1="266" x2="974.5" y2="275" stroke="#ff8080"/>
<rect x="971.5" y="257.5" width="6" height="8" fill="#000" stroke="#ff8080"/>
<line x1="982.5" y1="231" x2="982.5" y2="275" stroke="#ff8080"/>
<line x1="982.5" y1="280" x2="982.5" y2="285" stroke="#ff8080"/>
<rect x="979.5" y="275.5" width="6" height="4" fill="#000" stroke="#ff8080"/>
<line x1="989.5" y1="276" x2="989.5" y2="287" stroke="#ff8080"/>
<rect x="986.5" y="235.5" width="6" height="40" fill="#000" stroke="#ff8080"/>
<line x1="997.5" y1="236" x2="997.5" y2="245" stroke="#ff8080"/>
<rect x="994.5" y="192.5" width="6" height="43" fill="#000" stroke="#ff8080"/>
<line x1="1005.5" y1="150" x2="1005.5" y2="192" stroke="#ff8080"/>
<rect x="1002.5" y="192.5" width="6" height="46" fill="#00ffff" stroke="#ff8080"/>
<line x1="1013.5" y1="201" x2="1013.5" y2="219" stroke="#ff8080"/>
<line x1="1013.5" y1="256" x2="1013.5" y2="260" stroke="#ff8080"/>
<rect x="1010.5" y="219.5" width="6" height="36" fill="#000" stroke="#ff8080"/>
<line x1="1020.5" y1="209" x2="1020.5" y2="230" stroke="#ff8080"/>
<line x1="1020.5" y1="233" x2="1020.5" y2="241" stroke="#ff8080"/>
<rect x="1017.5" y="230.5" width="6" height="2" fill="#000" stroke="#ff8080"/>
<line x1="1028.5" y1="212" x2="1028.5" y2="226" stroke="#ff8080"/>
<line x1="1028.5" y1="234" x2="1028.5" y2="237" stroke="#ff8080"/>
<rect x="1025.5" y="226.5" width="6" height="7" fill="#000" stroke="#ff8080"/>
<line x1="1036.5" y1="224" x2="1036.5" y2="232" stroke="#00ffff"/>
<line x1="1036.5" y1="246" x2="1036.5" y2="251" stroke="#00ffff"/>
<rect x="1033" y="232" width="7" height="14" fill="#00ffff"/>
<line x1="1044.5" y1="252" x2="1044.5" y2="261" stroke="#ff8080"/>
<rect x="1041.5" y="203.5" width="6" height="48" fill="#000" stroke="#ff8080"/>
<line x1="1051.5" y1="168" x2="1051.5" y2="198" stroke="#ff8080"/>
<line x1="1051.5" y1="205" x2="1051.5" y2="212" stroke="#ff8080"/>
<rect x="1048.5" y="198.5" width="6" height="6" fill="#000" stroke="#ff8080"/>
<line x1="1059.5" y1="150" x2="1059.5" y2="160" stroke="#ff8080"/>
<line x1="1059.5" y1="191" x2="1059.5" y2="203" stroke="#ff8080"/>
<rect x="1056.5" y="160.5" width="6" height="30" fill="#000" stroke="#ff8080"/>
<line x1="1067.5" y1="161" x2="1067.5" y2="186" stroke="#ff8080"/>
<line x1="1067.5" y1="188" x2="1067.5" y2="196" stroke="#ff8080"/>
<rect x="1064" y="186" width="7" height="2" fill="#00ffff"/>
<line x1="1075.5" y1="142" x2="1075.5" y2="176" stroke="#ff8080"/>
<line x1="1075.5" y1="198" x2="1075.5" y2="206" stroke="#ff8080"/>
<rect x="1072.5" y="176.5" width="6" height="21" fill="#000" stroke="#ff8080"/>
<line x1="1083.5" y1="175" x2="1083.5" y2="191" stroke="#ff8080"/>
<rect x="1080.5" y="191.5" width="6" height="9" fill="#00ffff" stroke="#ff8080"/>
<line x1="1090.5" y1="185" x2="1090.5" y2="197" stroke="#ff8080"/>
<line x1="1090.5" y1="211" x2="1090.5" y2="227" stroke="#ff8080"/>
<rect x="1087.5" y="197.5" width="6" height="13" fill="#000" stroke="#ff8080"/>
<line x1="1098.5" y1="226" x2="1098.5" y2="242" stroke="#00ffff"/>
<rect x="1095" y="202" width="7" height="24" fill="#00ffff"/>
<line x1="1106.5" y1="213" x2="1106.5" y2="223" stroke="#00ffff"/>
<line x1="1106.5" y1="235" x2="1106.5" y2="238" stroke="#00ffff"/>
<rect x="1103.5" y="223.5" width="6" height="11" fill="#000" stroke="#00ffff"/>
<line x1="1114.5" y1="198" x2="1114.5" y2="218" stroke="#00ffff"/>
<line x1="1114.5" y1="224" x2="1114.5" y2="232" stroke="#00ffff"/>
<rect x="1111.5" y="218.5" width="6" height="5" fill="#000" stroke="#00ffff"/>
<line x1="1121.5" y1="221" x2="1121.5" y2="227" stroke="#00ffff"/>
<line x1="1121.5" y1="242" x2="1121.5" y2="247" stroke="#00ffff"/>
<rect x="1118" y="227" width="7" height="15" fill="#00ffff"/>
<line x1="1129.5" y1="229" x2="1129.5" y2="241" stroke="#00ffff"/>
<line x1="1129.5" y1="242" x2="1129.5" y2="247" stroke="#00ffff"/>
<rect x="1126" y="241" width="7" height="1" fill="#00ffff"/>
<line x1="1137.5" y1="231" x2="1137.5" y2="241" stroke="#00ffff"/>
<rect x="1134.5" y="241.5" width="6" height="2" fill="#000" stroke="#00ffff"/>
<line x1="1145.5" y1="242" x2="1145.5" y2="252" stroke="#00ffff"/>
<line x1="1145.5" y1="253" x2="1145.5" y2="257" stroke="#00ffff"/>
<rect x="1142" y="252" width="7" height="1" fill="#00ffff"/>
<line x1="1152.5" y1="226" x2="1152.5" y2="238" stroke="#00ffff"/>
<line x1="1152.5" y1="253" x2="1152.5" y2="256" stroke="#00ffff"/>
<rect x="1149.5" y="238.5" width="6" height="14" fill="#000" stroke="#00ffff"/>
<line x1="1160.5" y1="211" x2="1160.5" y2="218" stroke="#00ffff"/>
<line x1="1160.5" y1="241" x2="1160.5" y2="246" stroke="#00ffff"/>
<rect x="1157.5" y="218.5" width="6" height="22" fill="#000" stroke="#00ffff"/>
<line x1="1168.5" y1="208" x2="1168.5" y2="218" stroke="#00ffff"/>
<line x1="1168.5" y1="220" x2="1168.5" y2="230" stroke="#00ffff"/>
<rect x="1165" y="218" width="7" height="2" fill="#00ffff"/>
<line x1="1176.5" y1="218" x2="1176.5" y2="227" stroke="#00ffff"/>
<rect x="1173" y="227" width="7" height="8" fill="#00ffff"/>
<line x1="1183.5" y1="230" x2="1183.5" y2="238" stroke="#00ffff"/>
<line x1="1183.5" y1="239" x2="1183.5" y2="243" stroke="#00ffff"/>
<rect x="1180" y="238" width="7" height="1" fill="#00ffff"/>
<line x1="1191.5" y1="238" x2="1191.5" y2="240" stroke="#ff8080"/>
<rect x="1188.5" y="197.5" width="6" height="40" fill="#000" stroke="#ff8080"/>
<rect x="1196" y="206" width="7" height="11" fill="#00ffff"/>
<line x1="1207.5" y1="212" x2="1207.5" y2="218" stroke="#00ffff"/>
<line x1="1207.5" y1="222" x2="1207.5" y2="226" stroke="#00ffff"/>
<rect x="1204.5" y="218.5" width="6" height="3" fill="#000" stroke="#00ffff"/>
<line x1="1214.5" y1="189" x2="1214.5" y2="212" stroke="#00ffff"/>
<line x1="1214.5" y1="215" x2="1214.5" y2="217" stroke="#00ffff"/>
<rect x="1211.5" y="212.5" width="6" height="2" fill="#000" stroke="#00ffff"/>
<line x1="1222.5" y1="185" x2="1222.5" y2="197" stroke="#ff8080"/>
<line x1="1222.5" y1="223" x2="1222.5" y2="235" stroke="#ff8080"/>
<rect x="1219.5" y="197.5" width="6" height="25" fill="#000" stroke="#ff8080"/>
<line x1="1230.5" y1="178" x2="1230.5" y2="197" stroke="#ff8080"/>
<line x1="1230.5" y1="204" x2="1230.5" y2="207" stroke="#ff8080"/>
<rect x="1227.5" y="197.5" width="6" height="6" fill="#000" stroke="#ff8080"/>
<line x1="1238.5" y1="159" x2="1238.5" y2="172" stroke="#ff8080"/>
<rect x="1235.5" y="149.5" width="6" height="9" fill="#000" stroke="#ff8080"/>
<line x1="1246.5" y1="151" x2="1246.5" y2="166" stroke="#ff8080"/>
<rect x="1243.5" y="97.5" width="6" height="53" fill="#000" stroke="#ff8080"/>
<line x1="1253.5" y1="72" x2="1253.5" y2="85" stroke="#ff8080"/>
<line x1="1253.5" y1="108" x2="1253.5" y2="138" stroke="#ff8080"/>
<rect x="1250.5" y="85.5" width="6" height="22" fill="#00ffff" stroke="#ff8080"/>
<line x1="1261.5" y1="121" x2="1261.5" y2="127" stroke="#ff8080"/>
<line x1="1261.5" y1="152" x2="1261.5" y2="160" stroke="#ff8080"/>
<rect x="1258.5" y="127.5" width="6" height="24" fill="#00ffff" stroke="#ff8080"/>
<line x1="1269.5" y1="120" x2="1269.5" y2="145" stroke="#00ffff"/>
<rect x="1266.5" y="145.5" width="6" height="20" fill="#000" stroke="#00ffff"/>
<line x1="1277.5" y1="130" x2="1277.5" y2="153" stroke="#00ffff"/>
<line x1="1277.5" y1="160" x2="1277.5" y2="178" stroke="#00ffff"/>
<rect x="1274" y="153" width="7" height="7" fill="#00ffff"/>
<line x1="1284.5" y1="140" x2="1284.5" y2="151" stroke="#00ffff"/>
<line x1="1284.5" y1="170" x2="1284.5" y2="186" stroke="#00ffff"/>
<rect x="1281.5" y="151.5" width="6" height="18" fill="#000" stroke="#00ffff"/>
<line x1="1292.5" y1="151" x2="1292.5" y2="168" stroke="#00ffff"/>
<line x1="1292.5" y1="187" x2="1292.5" y2="196" stroke="#00ffff"/>
<rect x="1289" y="168" width="7" height="19" fill="#00ffff"/>
<line x1="1300.5" y1="163" x2="1300.5" y2="172" stroke="#00ffff"/>
<rect x="1297.5" y="172.5" width="6" height="20" fill="#000" stroke="#00ffff"/>
<line x1="1308.5" y1="135" x2="1308.5" y2="150" stroke="#00ffff"/>
<line x1="1308.5" y1="175" x2="1308.5" y2="185" stroke="#00ffff"/>
<rect x="1305.5" y="150.5" width="6" height="24" fill="#000" stroke="#00ffff"/>
<line x1="1315.5" y1="151" x2="1315.5" y2="156" stroke="#00ffff"/>
<rect x="1312" y="156" width="7" height="17" fill="#00ffff"/>
<line x1="1323.5" y1="164" x2="1323.5" y2="180" stroke="#00ffff"/>
<rect x="1320" y="180" width="7" height="9" fill="#00ffff"/>
<line x1="1331.5" y1="182" x2="1331.5" y2="187" stroke="#00ffff"/>
<line x1="1331.5" y1="209" x2="1331.5" y2="217" stroke="#00ffff"/>
<rect x="1328" y="187" width="7" height="22" fill="#00ffff"/>
<line x1="1339.5" y1="187" x2="1339.5" y2="193" stroke="#00ffff"/>
<rect x="1336.5" y="193.5" width="6" height="21" fill="#000" stroke="#00ffff"/>
<line x1="1346.5" y1="164" x2="1346.5" y2="186" stroke="#00ffff"/>
<line x1="1346.5" y1="191" x2="1346.5" y2="194" stroke="#00ffff"/>
<rect x="1343.5" y="186.5" width="6" height="4" fill="#000" stroke="#00ffff"/>
<line x1="1354.5" y1="181" x2="1354.5" y2="193" stroke="#00ffff"/>
<rect x="1351.5" y="193.5" width="6" height="2" fill="#000" stroke="#00ffff"/>
<line x1="1362.5" y1="177" x2="1362.5" y2="190" stroke="#00ffff"/>
<line x1="1362.5" y1="195" x2="1362.5" y2="200" stroke="#00ffff"/>
<rect x="1359.5" y="190.5" width="6" height="4" fill="#000" stroke="#00ffff"/>
<line x1="1370.5" y1="169" x2="1370.5" y2="180" stroke="#00ffff"/>
<rect x="1367.5" y="180.5" width="6" height="6" fill="#000" stroke="#00ffff"/>
<line x1="1378.5" y1="136" x2="1378.5" y2="153" stroke="#ff8080"/>
<line x1="1378.5" y1="177" x2="1378.5" y2="182" stroke="#ff8080"/>
<rect x="1375.5" y="153.5" width="6" height="23" fill="#000" stroke="#ff8080"/>
<line x1="1385.5" y1="147" x2="1385.5" y2="159" stroke="#ff8080"/>
<rect x="1382.5" y="159.5" width="6" height="16" fill="#00ffff" stroke="#ff8080"/>
<rect x="1390" y="180" width="7" height="9" fill="#00ffff"/>
<line x1="1401.5" y1="180" x2="1401.5" y2="186" stroke="#00ffff"/>
<line x1="1401.5" y1="193" x2="1401.5" y2="200" stroke="#00ffff"/>
<rect x="1398" y="186" width="7" height="7" fill="#00ffff"/>
<line x1="1409.5" y1="182" x2="1409.5" y2="188" stroke="#00ffff"/>
<line x1="1409.5" y1="197" x2="1409.5" y2="200" stroke="#00ffff"/>
<rect x="1406.5" y="188.5" width="6" height="8" fill="#000" stroke="#00ffff"/>
<g transform="translate(329,510)"><rect x="0" y="0" width="8" height="30" fill="#000"/><rect x="0" y="0.5" width="8" height="13" fill="#0b5f3a"/><text x="0" y="13" textLength="8" lengthAdjust="spacingAndGlyphs" font-size="17" font-weight="bold" fill="url(#sg)" font-family="Liberation Sans, sans-serif">S</text><path d="M2 18h4v3h2l-4 5l-4-5h2z" fill="#008000"/><rect x="3" y="25.5" width="2" height="3.5" fill="#006a00"/></g>
<g transform="translate(384,450)"><rect x="0" y="0" width="8" height="30" fill="#000"/><rect x="0" y="0.5" width="8" height="13" fill="#0b5f3a"/><text x="0" y="13" textLength="8" lengthAdjust="spacingAndGlyphs" font-size="17" font-weight="bold" fill="url(#sg)" font-family="Liberation Sans, sans-serif">S</text><path d="M2 18h4v3h2l-4 5l-4-5h2z" fill="#008000"/><rect x="3" y="25.5" width="2" height="3.5" fill="#006a00"/></g>
<g transform="translate(640,100)"><rect x="0" y="0" width="8" height="30" fill="#000"/><rect x="0" y="0.5" width="8" height="13" fill="#0b5f3a"/><text x="0" y="13" textLength="8" lengthAdjust="spacingAndGlyphs" font-size="17" font-weight="bold" fill="url(#sg)" font-family="Liberation Sans, sans-serif">S</text><path d="M2 18h4v3h2l-4 5l-4-5h2z" fill="#008000"/><rect x="3" y="25.5" width="2" height="3.5" fill="#006a00"/></g>
<g transform="translate(1098,184)"><rect x="0" y="0" width="8" height="30" fill="#000"/><rect x="0" y="0.5" width="8" height="13" fill="#0b5f3a"/><text x="0" y="13" textLength="8" lengthAdjust="spacingAndGlyphs" font-size="17" font-weight="bold" fill="url(#sg)" font-family="Liberation Sans, sans-serif">S</text><path d="M2 18h4v3h2l-4 5l-4-5h2z" fill="#008000"/><rect x="3" y="25.5" width="2" height="3.5" fill="#006a00"/></g>
<g transform="translate(1199,196)"><rect x="0" y="0" width="8" height="30" fill="#000"/><rect x="0" y="0.5" width="8" height="13" fill="#0b5f3a"/><text x="0" y="13" textLength="8" lengthAdjust="spacingAndGlyphs" font-size="17" font-weight="bold" fill="url(#sg)" font-family="Liberation Sans, sans-serif">S</text><path d="M2 18h4v3h2l-4 5l-4-5h2z" fill="#008000"/><rect x="3" y="25.5" width="2" height="3.5" fill="#006a00"/></g>
<g transform="translate(1261,91)"><rect x="0" y="0" width="8" height="30" fill="#000"/><rect x="0" y="0.5" width="8" height="13" fill="#0b5f3a"/><text x="0" y="13" textLength="8" lengthAdjust="spacingAndGlyphs" font-size="17" font-weight="bold" fill="url(#sg)" font-family="Liberation Sans, sans-serif">S</text><path d="M2 18h4v3h2l-4 5l-4-5h2z" fill="#008000"/><rect x="3" y="25.5" width="2" height="3.5" fill="#006a00"/></g>
<g transform="translate(1393,167.5)"><rect x="0" y="0" width="8" height="30" fill="#000"/><rect x="0" y="0.5" width="8" height="13" fill="#0b5f3a"/><text x="0" y="13" textLength="8" lengthAdjust="spacingAndGlyphs" font-size="17" font-weight="bold" fill="url(#sg)" font-family="Liberation Sans, sans-serif">S</text><path d="M2 18h4v3h2l-4 5l-4-5h2z" fill="#008000"/><rect x="3" y="25.5" width="2" height="3.5" fill="#006a00"/></g>
<g transform="translate(50,545)"><rect x="0" y="0" width="8" height="22" fill="#000"/><path d="M0 3.8Q.4 .6 4 0Q7.6 .6 8 3.8L6 4.2V7H2V4.2Z" fill="#d4d400"/><rect x="0" y="8.500" width="8" height="13" fill="#de5514"/><text x="0" y="20.5" textLength="8" lengthAdjust="spacingAndGlyphs" font-size="16" font-weight="bold" fill="#f59a2a" font-family="Liberation Sans, sans-serif">B</text><rect x="3.6" y="11.5" width="2" height="2.5" fill="#a01810"/><rect x="3.6" y="16" width="2.2" height="3" fill="#a01810"/></g>
<g transform="translate(361,517)"><rect x="0" y="0" width="8" height="22" fill="#000"/><path d="M0 3.8Q.4 .6 4 0Q7.6 .6 8 3.8L6 4.2V7H2V4.2Z" fill="#d4d400"/><rect x="0" y="8.500" width="8" height="13" fill="#de5514"/><text x="0" y="20.5" textLength="8" lengthAdjust="spacingAndGlyphs" font-size="16" font-weight="bold" fill="#f59a2a" font-family="Liberation Sans, sans-serif">B</text><rect x="3.6" y="11.5" width="2" height="2.5" fill="#a01810"/><rect x="3.6" y="16" width="2.2" height="3" fill="#a01810"/></g>
<g transform="translate(476.5,495)"><rect x="0" y="0" width="8" height="22" fill="#000"/><path d="M0 3.8Q.4 .6 4 0Q7.6 .6 8 3.8L6 4.2V7H2V4.2Z" fill="#d4d400"/><rect x="0" y="8.500" width="8" height="13" fill="#de5514"/><text x="0" y="20.5" textLength="8" lengthAdjust="spacingAndGlyphs" font-size="16" font-weight="bold" fill="#f59a2a" font-family="Liberation Sans, sans-serif">B</text><rect x="3.6" y="11.5" width="2" height="2.5" fill="#a01810"/><rect x="3.6" y="16" width="2.2" height="3" fill="#a01810"/></g>
<g transform="translate(912,371.5)"><rect x="0" y="0" width="8" height="22" fill="#000"/><path d="M0 3.8Q.4 .6 4 0Q7.6 .6 8 3.8L6 4.2V7H2V4.2Z" fill="#d4d400"/><rect x="0" y="8.500" width="8" height="13" fill="#de5514"/><text x="0" y="20.5" textLength="8" lengthAdjust="spacingAndGlyphs" font-size="16" font-weight="bold" fill="#f59a2a" font-family="Liberation Sans, sans-serif">B</text><rect x="3.6" y="11.5" width="2" height="2.5" fill="#a01810"/><rect x="3.6" y="16" width="2.2" height="3" fill="#a01810"/></g>
<g transform="translate(1191,246.5)"><rect x="0" y="0" width="8" height="22" fill="#000"/><path d="M0 3.8Q.4 .6 4 0Q7.6 .6 8 3.8L6 4.2V7H2V4.2Z" fill="#d4d400"/><rect x="0" y="8.500" width="8" height="13" fill="#de5514"/><text x="0" y="20.5" textLength="8" lengthAdjust="spacingAndGlyphs" font-size="16" font-weight="bold" fill="#f59a2a" font-family="Liberation Sans, sans-serif">B</text><rect x="3.6" y="11.5" width="2" height="2.5" fill="#a01810"/><rect x="3.6" y="16" width="2.2" height="3" fill="#a01810"/></g>
<g transform="translate(1222,243)"><rect x="0" y="0" width="8" height="22" fill="#000"/><path d="M0 3.8Q.4 .6 4 0Q7.6 .6 8 3.8L6 4.2V7H2V4.2Z" fill="#d4d400"/><rect x="0" y="8.500" width="8" height="13" fill="#de5514"/><text x="0" y="20.5" textLength="8" lengthAdjust="spacingAndGlyphs" font-size="16" font-weight="bold" fill="#f59a2a" font-family="Liberation Sans, sans-serif">B</text><rect x="3.6" y="11.5" width="2" height="2.5" fill="#a01810"/><rect x="3.6" y="16" width="2.2" height="3" fill="#a01810"/></g>
<g transform="translate(1378,190)"><rect x="0" y="0" width="8" height="22" fill="#000"/><path d="M0 3.8Q.4 .6 4 0Q7.6 .6 8 3.8L6 4.2V7H2V4.2Z" fill="#d4d400"/><rect x="0" y="8.500" width="8" height="13" fill="#de5514"/><text x="0" y="20.5" textLength="8" lengthAdjust="spacingAndGlyphs" font-size="16" font-weight="bold" fill="#f59a2a" font-family="Liberation Sans, sans-serif">B</text><rect x="3.6" y="11.5" width="2" height="2.5" fill="#a01810"/><rect x="3.6" y="16" width="2.2" height="3" fill="#a01810"/></g>
<path d="M34.5 549.5H46M34.5 549.5l3-2.5M34.5 549.5l3.5 3.5" stroke="#fff" fill="none"/>
<text x="47" y="554" font-size="12" fill="#fff" font-family="Liberation Sans, sans-serif">4.85</text>
<path d="M1254 73.5L1265 78M1254 73.5l2.5-3.5M1254 73.5l4 0" stroke="#fff" fill="none"/>
<text x="1267" y="83.5" font-size="12" fill="#fff" font-family="Liberation Sans, sans-serif">24.00</text>
<rect x="951" y="587" width="13" height="13" fill="#008000"/>
<text x="957.5" y="598" text-anchor="middle" font-size="12" fill="#fff" font-family="Liberation Sans, Noto Sans CJK SC, sans-serif">跌</text>
<rect x="1240" y="587" width="13" height="13" fill="#008000"/>
<text x="1246.5" y="598" text-anchor="middle" font-size="12" fill="#fff" font-family="Liberation Sans, Noto Sans CJK SC, sans-serif">减</text>
<rect x="3" y="708" width="1407" height="1" fill="#fff"/>
<polyline points="3.2,707.0 15.9,703.8 28.5,700.3 34.9,700.3 47.6,703.5 60.2,706.0 72.9,708.2 82.4,710.8 95.1,713.0 120.5,713.0 133.2,714.6 149.0,715.5 161.7,713.0 183.9,713.0 206.1,713.0 218.8,714.6 234.6,713.0 253.6,710.8 269.5,709.2 301.2,710.2 317.1,711.7 329.7,713.0 342.4,712.1 361.4,713.0 371.0,718.1 383.6,724.4 393.2,720.3 400.1,715.5 409.0,716.2 415.3,717.8 424.9,714.0 437.5,708.2 450.2,702.2 459.7,700.6 460.0,700.8 469.5,704.0 477.4,708.7 485.4,718.2 493.3,726.8 499.6,727.7 509.1,723.9 517.1,723.6 526.6,720.8 532.9,719.8 539.3,721.4 551.9,734.1 564.6,753.1 580.5,776.9 593.2,793.7 602.7,783.2 612.2,773.7 621.7,766.4 632.8,756.9 640.7,742.0 645.5,724.6 650.2,707.1 656.6,686.5 662.9,673.8 670.8,661.2 678.8,651.0 688.3,646.9 694.6,646.9 701.0,651.6 710.5,655.8 718.4,658.6 726.3,665.9 734.3,674.5 742.2,688.1 749.2,692.9 754.9,688.1 764.4,681.1 772.3,678.6 780.2,673.2 789.7,667.5 796.1,668.1 804.0,672.3 811.9,681.8 819.9,686.5 834.1,686.5 843.0,690.6 850.0,688.1 859.5,683.3 867.4,679.2 872.2,678.6 880.1,681.1 889.6,689.1 900.7,696.0 913.4,704.0 926.1,708.1 934.0,714.4 941.9,726.2 950.5,744.5 957.8,745.8 965.7,745.8 974.3,749.9 983.1,745.8 989.5,745.8 997.4,753.7 1005.3,752.1 1013.3,746.8 1021.2,738.2 1029.1,731.9 1036.1,722.3 1043.4,720.8 1049.7,723.6 1059.9,731.9 1067.2,730.3 1075.1,728.4 1083.0,721.4 1092.5,708.1 1098.9,699.8 1106.8,693.5 1114.7,691.3 1122.6,684.9 1130.6,681.8 1138.5,681.4 1145.8,678.6 1152.8,681.8 1160.7,689.1 1168.6,694.4 1176.5,696.0 1182.9,695.1 1192.4,703.3 1200.3,704.9 1208.3,704.9 1216.2,708.1 1224.1,710.9 1231.4,713.5 1238.4,723.9 1246.3,739.8 1253.3,747.4 1262.2,738.8 1270.1,730.3 1278.0,720.8 1287.5,708.7 1293.9,702.4 1301.2,697.6 1308.1,699.8 1314.5,698.6 1322.4,694.4 1331.9,684.9 1338.2,683.3 1346.2,687.2 1355.7,689.1 1365.2,691.9 1371.5,696.0 1379.5,704.6 1385.8,706.2 1393.7,702.4 1401.7,698.6 1408.6,697.6" fill="none" stroke="#00ff00" stroke-width="1" stroke-linejoin="round" shape-rendering="crispEdges" />
<polyline points="3.2,710.0 15.9,713.2 28.5,716.7 34.9,716.7 47.6,713.5 60.2,711.0 72.9,708.8 82.4,706.2 95.1,704.0 120.5,704.0 133.2,702.4 149.0,701.5 161.7,704.0 183.9,704.0 206.1,704.0 218.8,702.4 234.6,704.0 253.6,706.2 269.5,707.8 301.2,706.8 317.1,705.3 329.7,704.0 342.4,704.9 361.4,704.0 371.0,698.9 383.6,692.6 393.2,696.7 400.1,701.5 409.0,700.8 415.3,699.2 424.9,703.0 437.5,708.8 450.2,714.8 459.7,716.4 460.0,716.2 469.5,713.0 477.4,708.3 485.4,698.8 493.3,690.2 499.6,689.3 509.1,693.1 517.1,693.4 526.6,696.2 532.9,697.2 539.3,695.6 551.9,682.9 564.6,663.9 580.5,640.1 593.2,623.3 602.7,633.8 612.2,643.3 621.7,650.6 632.8,660.1 640.7,675.0 645.5,692.4 650.2,709.9 656.6,730.5 662.9,743.2 670.8,755.8 678.8,766.0 688.3,770.1 694.6,770.1 701.0,765.4 710.5,761.2 718.4,758.4 726.3,751.1 734.3,742.5 742.2,728.9 749.2,724.1 754.9,728.9 764.4,735.9 772.3,738.4 780.2,743.8 789.7,749.5 796.1,748.9 804.0,744.7 811.9,735.2 819.9,730.5 834.1,730.5 843.0,726.4 850.0,728.9 859.5,733.7 867.4,737.8 872.2,738.4 880.1,735.9 889.6,727.9 900.7,721.0 913.4,713.0 926.1,708.9 934.0,702.6 941.9,690.8 950.5,672.5 957.8,671.2 965.7,671.2 974.3,667.1 983.1,671.2 989.5,671.2 997.4,663.3 1005.3,664.9 1013.3,670.2 1021.2,678.8 1029.1,685.1 1036.1,694.7 1043.4,696.2 1049.7,693.4 1059.9,685.1 1067.2,686.7 1075.1,688.6 1083.0,695.6 1092.5,708.9 1098.9,717.2 1106.8,723.5 1114.7,725.7 1122.6,732.1 1130.6,735.2 1138.5,735.6 1145.8,738.4 1152.8,735.2 1160.7,727.9 1168.6,722.6 1176.5,721.0 1182.9,721.9 1192.4,713.7 1200.3,712.1 1208.3,712.1 1216.2,708.9 1224.1,706.1 1231.4,703.5 1238.4,693.1 1246.3,677.2 1253.3,669.6 1262.2,678.2 1270.1,686.7 1278.0,696.2 1287.5,708.3 1293.9,714.6 1301.2,719.4 1308.1,717.2 1314.5,718.4 1322.4,722.6 1331.9,732.1 1338.2,733.7 1346.2,729.8 1355.7,727.9 1365.2,725.1 1371.5,721.0 1379.5,712.4 1385.8,710.8 1393.7,714.6 1401.7,718.4 1408.6,719.4" fill="none" stroke="#ff0000" stroke-width="1" stroke-linejoin="round" shape-rendering="crispEdges" />
<rect x="3" y="889" width="1407" height="2" fill="#80ffff"/>
<polyline points="3.2,906.8 11.1,905.3 17.4,906.8 28.5,906.8 34.9,898.3 42.8,900.8 50.7,895.8 57.1,894.2 65.0,897.0 72.9,895.8 82.4,892.6 90.4,891.0 104.6,891.0 120.5,891.0 128.4,888.8 136.3,883.1 150.6,883.1 159.5,889.4 168.0,885.6 183.9,884.3 193.4,881.5 199.7,879.9 207.7,879.9 215.6,874.8 223.5,874.8 231.5,876.7 236.2,876.7 244.1,880.8 252.1,878.3 260.0,878.6 267.9,881.2 275.8,879.9 283.8,876.4 291.7,876.7 298.0,873.9 313.9,873.9 322.4,866.6 329.7,868.5 338.6,868.8 345.6,864.7 354.5,864.7 361.4,859.3 369.4,838.0 376.3,819.7 384.3,846.0 392.5,850.1 399.5,860.2 407.4,844.4 415.3,838.0 424.2,852.9 438.2,853.9 446.4,865.9 453.4,865.0 460.0,861.2 468.9,852.3 477.4,836.5 485.4,819.7 492.3,819.7 500.6,845.0 508.5,846.3 516.4,831.7 524.4,841.2 531.3,836.5 539.3,820.9 548.8,819.7 593.2,819.7 601.1,827.3 610.6,823.8 617.9,823.8 625.5,826.0 632.8,820.9 640.1,834.9 648.6,844.4 656.6,849.8 664.5,849.8 671.8,852.3 678.8,857.1 686.7,855.8 696.2,855.8 702.5,853.3 710.5,857.1 718.4,855.5 726.3,852.9 733.3,851.4 741.5,842.8 748.5,848.5 757.4,857.1 772.3,857.1 781.8,864.0 791.3,865.0 802.4,862.5 811.3,858.3 818.3,859.0 826.2,864.0 835.7,864.0 842.7,862.5 851.6,869.8 857.9,870.4 864.2,872.9 880.1,872.9 888.0,869.1 896.0,870.7 905.5,868.8 913.4,868.5 927.7,868.5 934.0,865.0 942.9,856.4 951.4,849.1 958.7,857.1 966.7,850.1 974.6,848.5 982.5,852.0 990.4,842.8 997.4,835.2 1005.3,845.0 1013.3,841.2 1021.2,842.5 1029.1,842.5 1036.4,846.3 1045.0,838.0 1051.3,838.0 1059.2,829.5 1067.2,834.9 1075.1,832.3 1083.0,837.1 1090.9,837.1 1098.9,841.9 1106.8,841.2 1114.7,840.3 1121.1,844.7 1136.9,844.7 1144.8,846.9 1152.8,844.4 1160.7,840.3 1168.6,840.6 1176.5,844.4 1184.5,844.7 1191.5,836.1 1198.7,839.6 1214.6,839.6 1223.2,836.1 1230.4,836.1 1238.4,827.9 1246.3,819.7 1254.2,826.0 1262.2,832.7 1270.1,832.3 1276.4,834.9 1284.3,834.9 1292.9,840.3 1300.2,837.4 1308.8,833.0 1316.1,837.4 1324.0,840.6 1331.9,844.4 1341.4,840.6 1365.2,840.6 1371.5,838.7 1378.5,833.9 1385.8,838.0 1393.7,841.5 1409.6,841.5" fill="none" stroke="#ffff00" stroke-width="2" stroke-linejoin="round" shape-rendering="crispEdges" />
<rect x="0" y="601" width="1465" height="1" fill="#344054"/>
<rect x="0" y="797" width="1465" height="1" fill="#344054"/>
<rect x="0" y="909" width="1413" height="1" fill="#344054"/>
<rect x="1413" y="21" width="1" height="906" fill="#344054"/>
<rect x="1413" y="797" width="52" height="2" fill="#344054"/>
<rect x="1413" y="908" width="52" height="2" fill="#344054"/>
<rect x="1463" y="797" width="2" height="112" fill="#344054"/>
<rect x="1413" y="797" width="2" height="112" fill="#344054"/>
<rect x="1" y="926" width="1412" height="1" fill="#242426"/>
<rect x="1413" y="73" width="6" height="1" fill="#344054"/>
<rect x="1413" y="98" width="3" height="1" fill="#344054"/>
<rect x="1413" y="123" width="6" height="1" fill="#344054"/>
<rect x="1413" y="148" width="3" height="1" fill="#344054"/>
<rect x="1413" y="173" width="6" height="1" fill="#344054"/>
<rect x="1413" y="198" width="3" height="1" fill="#344054"/>
<rect x="1413" y="222" width="6" height="1" fill="#344054"/>
<rect x="1413" y="247" width="3" height="1" fill="#344054"/>
<rect x="1413" y="272" width="6" height="1" fill="#344054"/>
<rect x="1413" y="297" width="3" height="1" fill="#344054"/>
<rect x="1413" y="322" width="6" height="1" fill="#344054"/>
<rect x="1413" y="347" width="3" height="1" fill="#344054"/>
<rect x="1413" y="372" width="6" height="1" fill="#344054"/>
<rect x="1413" y="397" width="3" height="1" fill="#344054"/>
<rect x="1413" y="421" width="6" height="1" fill="#344054"/>
<rect x="1413" y="446" width="3" height="1" fill="#344054"/>
<rect x="1413" y="471" width="6" height="1" fill="#344054"/>
<rect x="1413" y="496" width="3" height="1" fill="#344054"/>
<rect x="1413" y="521" width="6" height="1" fill="#344054"/>
<rect x="1413" y="618" width="6" height="1" fill="#344054"/>
<rect x="1413" y="648" width="6" height="1" fill="#344054"/>
<rect x="1413" y="678" width="6" height="1" fill="#344054"/>
<rect x="1413" y="708" width="6" height="1" fill="#344054"/>
<rect x="1413" y="739" width="6" height="1" fill="#344054"/>
<rect x="1413" y="633" width="3" height="1" fill="#344054"/>
<rect x="1413" y="663" width="3" height="1" fill="#344054"/>
<rect x="1413" y="693" width="3" height="1" fill="#344054"/>
<rect x="1413" y="724" width="3" height="1" fill="#344054"/>
<rect x="1413" y="819" width="6" height="1" fill="#344054"/>
<rect x="1413" y="863" width="6" height="1" fill="#344054"/>
<rect x="1413" y="841" width="3" height="1" fill="#344054"/>
<rect x="57" y="910" width="1" height="15" fill="#344054"/>
<rect x="204" y="910" width="1" height="15" fill="#344054"/>
<rect x="367" y="910" width="1" height="15" fill="#344054"/>
<rect x="530" y="910" width="1" height="15" fill="#344054"/>
<rect x="709" y="910" width="1" height="15" fill="#344054"/>
<rect x="872" y="910" width="1" height="15" fill="#344054"/>
<rect x="996" y="910" width="1" height="15" fill="#344054"/>
<rect x="1167" y="910" width="1" height="15" fill="#344054"/>
<rect x="1338" y="910" width="1" height="15" fill="#344054"/>
<rect x="94" y="910" width="1" height="2" fill="#344054"/>
<rect x="131" y="910" width="1" height="2" fill="#344054"/>
<rect x="167" y="910" width="1" height="2" fill="#344054"/>
<rect x="245" y="910" width="1" height="2" fill="#344054"/>
<rect x="286" y="910" width="1" height="2" fill="#344054"/>
<rect x="326" y="910" width="1" height="2" fill="#344054"/>
<rect x="408" y="910" width="1" height="2" fill="#344054"/>
<rect x="448" y="910" width="1" height="2" fill="#344054"/>
<rect x="489" y="910" width="1" height="2" fill="#344054"/>
<rect x="575" y="910" width="1" height="2" fill="#344054"/>
<rect x="620" y="910" width="1" height="2" fill="#344054"/>
<rect x="664" y="910" width="1" height="2" fill="#344054"/>
<rect x="750" y="910" width="1" height="2" fill="#344054"/>
<rect x="791" y="910" width="1" height="2" fill="#344054"/>
<rect x="831" y="910" width="1" height="2" fill="#344054"/>
<rect x="903" y="910" width="1" height="2" fill="#344054"/>
<rect x="934" y="910" width="1" height="2" fill="#344054"/>
<rect x="965" y="910" width="1" height="2" fill="#344054"/>
<rect x="1039" y="910" width="1" height="2" fill="#344054"/>
<rect x="1082" y="910" width="1" height="2" fill="#344054"/>
<rect x="1124" y="910" width="1" height="2" fill="#344054"/>
<rect x="1210" y="910" width="1" height="2" fill="#344054"/>
<rect x="1253" y="910" width="1" height="2" fill="#344054"/>
<rect x="1295" y="910" width="1" height="2" fill="#344054"/>
<rect x="1379" y="910" width="1" height="2" fill="#344054"/>
<path d="M1385.5 25.500l5 5l-5 5l-5-5z" fill="none" stroke="#666"/>
<rect x="1398.5" y="25.500" width="11" height="10" rx="2" fill="none" stroke="#666"/><rect x="1405" y="27" width="3" height="7" fill="#777"/>
</svg>
<div id="hdr"><span style="left:3px">大港股份(日线)</span><span class="dd" style="left:91px;top:3px"></span><span style="left:107px">BS操盘线</span><span style="left:163px">MA1: 19.73</span><span style="left:233px;color:#ffff00">MA2: 19.56</span><span style="left:302px;color:#ff00ff">MA3: 19.86</span><span style="left:372px;color:#ff8080">MA4: 19.77</span><span style="left:441px;color:#00ffff">MA5: 18.80</span><span style="left:511px;color:#00ff00">MA6: -</span></div>
<div class="cap" style="top:601px"><span class="dd" style="left:2px;top:3px"></span><span style="left:18px">ZLJC.</span><span style="left:52px">中轴: 0.00</span><span style="left:112px;color:#00ff00">空方主力: 0.74</span><span style="left:196px;color:#ff0000">多方主力: -0.74</span></div>
<div class="cap" style="top:797px"><span class="dd" style="left:2px;top:3px"></span><span style="left:18px">龙腾活跃</span><span style="left:70px;color:#ffff00">龙腾活跃: 75.13</span><span style="left:161px;color:#80ffff">海面: 20.00</span></div>
<i style="top:65px">24.00</i><i style="top:115px">22.00</i><i style="top:165px">20.00</i><i style="top:214px">18.00</i><i style="top:264px">16.00</i><i style="top:314px">14.00</i><i style="top:364px">12.00</i><i style="top:413px">10.00</i><i style="top:463px">8.00</i><i style="top:513px">6.00</i><i style="top:610px">6.00</i><i style="top:640px">4.00</i><i style="top:670px">2.00</i><i style="top:700px">0.00</i><i style="top:731px">-2.00</i><i style="top:811px">100.0</i><i style="top:855px">50.00</i>
<em style="left:3px">2022年</em><em style="left:59px">5</em><em style="left:206px">6</em><em style="left:369px">7</em><em style="left:532px">8</em><em style="left:711px">9</em><em style="left:874px">10</em><em style="left:998px">11</em><em style="left:1169px">12</em><em style="left:1340px">1</em>
<div id="rx">日线</div>
<div id="vb"></div>
<div id="rp"><u style="top:25px"></u><u style="top:45px"></u><u style="top:142px"></u><u style="top:239px"></u><u style="top:336px"></u><u style="top:418px"></u><u style="top:498px"></u><div class="thick"></div><span class="R">R</span><span class="code">002077</span><p style="top:26px">委比</p><p style="top:46px">卖五</p><p style="top:65px">卖四</p><p style="top:84px">卖三</p><p style="top:103px">卖二</p><p style="top:122px">卖一</p><p style="top:143px">买一</p><p style="top:162px">买二</p><p style="top:181px">买三</p><p style="top:200px">买四</p><p style="top:219px">买五</p><p style="top:240px">现价</p><p style="top:259px">涨跌</p><p style="top:278px">涨幅</p><p style="top:297px">总量</p><p style="top:316px">外盘</p><p style="top:337px">换手</p><p style="top:356px">净资</p><p style="top:375px">收益(三)</p><p style="top:398px">交易状态</p><p style="top:419px">净流入额</p><p style="top:438px">大宗流入</p><p style="top:457px">5日净额</p><p style="top:476px">5日大宗</p><p style="top:498px;left:6.5px">14:55</p><p style="top:516px;left:6.5px">14:55</p><p style="top:534px;left:6.5px">14:56</p><p style="top:552px;left:6.5px">14:56</p><p style="top:570px;left:6.5px">14:56</p><p style="top:588px;left:6.5px">14:56</p><p style="top:606px;left:6.5px">14:56</p><p style="top:624px;left:6.5px">14:56</p><p style="top:642px;left:6.5px">14:56</p><p style="top:660px;left:6.5px">14:56</p><p style="top:678px;left:6.5px">14:56</p><p style="top:696px;left:6.5px">14:56</p><p style="top:714px;left:6.5px">14:56</p><p style="top:732px;left:6.5px">14:56</p><p style="top:750px;left:6.5px">14:56</p><p style="top:768px;left:6.5px">14:56</p><p style="top:786px;left:6.5px">14:56</p><p style="top:804px;left:6.5px">14:56</p><p style="top:822px;left:6.5px">14:56</p><p style="top:840px;left:6.5px">14:56</p><p style="top:858px;left:6.5px">14:56</p><p style="top:876px;left:6.5px">14:56</p><p style="top:894px;left:6.5px">14:57</p><p style="top:912px;left:6.5px">15:00</p></div>
<div id="sb"></div>
</body></html>
